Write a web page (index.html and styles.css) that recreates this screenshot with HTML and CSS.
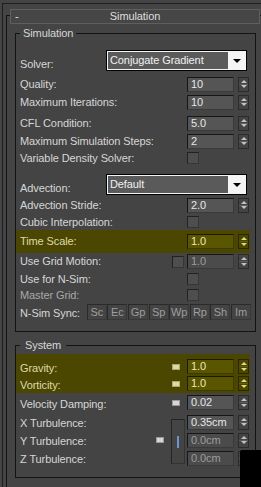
FILE: index.html
```html
<!DOCTYPE html>
<html lang="en">
<head>
    <meta charset="UTF-8">
    <meta name="viewport" content="width=device-width, initial-scale=1.0">
    <title>Simulation</title>
    <link rel="stylesheet" href="styles.css">
</head>
<body>

<div class="frame">
    <div class="rollout">
        <div class="roll-head">
            <span class="minus">-</span>
            <span class="roll-title">Simulation</span>
            <span></span>
        </div>

        <div class="roll-body">
            <fieldset class="group sim">
                <legend>Simulation</legend>

                <div class="row combo-row mt10">
                    <span class="lbl">Solver:</span>
                    <div class="combo"><span class="combo-text">Conjugate Gradient</span><span class="combo-arrow"></span></div>
                </div>
                <div class="row mt4">
                    <span class="lbl">Quality:</span>
                    <span class="num">10</span><span class="spin"></span>
                </div>
                <div class="row">
                    <span class="lbl">Maximum Iterations:</span>
                    <span class="num">10</span><span class="spin"></span>
                </div>
                <div class="row mt3">
                    <span class="lbl">CFL Condition:</span>
                    <span class="num">5.0</span><span class="spin"></span>
                </div>
                <div class="row">
                    <span class="lbl">Maximum Simulation Steps:</span>
                    <span class="num">2</span><span class="spin"></span>
                </div>
                <div class="row short">
                    <span class="lbl">Variable Density Solver:</span>
                    <span class="ctl"><span class="cb"></span></span>
                </div>

                <div class="row combo-row mt8">
                    <span class="lbl">Advection:</span>
                    <div class="combo"><span class="combo-text">Default</span><span class="combo-arrow"></span></div>
                </div>
                <div class="row mt1">
                    <span class="lbl">Advection Stride:</span>
                    <span class="num">2.0</span><span class="spin"></span>
                </div>
                <div class="row short">
                    <span class="lbl">Cubic Interpolation:</span>
                    <span class="ctl"><span class="cb"></span></span>
                </div>
                <div class="row hl tall">
                    <span class="lbl">Time Scale:</span>
                    <span class="num">1.0</span><span class="spin"></span>
                </div>
                <div class="row grid-motion">
                    <span class="lbl">Use Grid Motion:</span>
                    <span class="aux"><span class="cb"></span></span>
                    <span class="num off">1.0</span><span class="spin"></span>
                </div>
                <div class="row short mt1">
                    <span class="lbl">Use for N-Sim:</span>
                    <span class="ctl"><span class="cb"></span></span>
                </div>
                <div class="row short">
                    <span class="lbl dim">Master Grid:</span>
                    <span class="ctl"><span class="cb"></span></span>
                </div>
                <div class="row short sync-row mt1">
                    <span class="lbl">N-Sim Sync:</span>
                    <div class="sync">
                        <span class="sbtn">Sc</span>
                        <span class="sbtn">Ec</span>
                        <span class="sbtn">Gp</span>
                        <span class="sbtn">Sp</span>
                        <span class="sbtn">Wp</span>
                        <span class="sbtn">Rp</span>
                        <span class="sbtn">Sh</span>
                        <span class="sbtn">Im</span>
                    </div>
                </div>
            </fieldset>

            <fieldset class="group sys">
                <legend>System</legend>

                <div class="band">
                    <div class="row mid hl">
                        <span class="lbl">Gravity:</span>
                        <span class="aux"><span class="ind yellow"></span></span>
                        <span class="num">1.0</span><span class="spin"></span>
                    </div>
                    <div class="row mid hl">
                        <span class="lbl">Vorticity:</span>
                        <span class="aux"><span class="ind yellow"></span></span>
                        <span class="num">1.0</span><span class="spin"></span>
                    </div>
                </div>
                <div class="row mid mt1">
                    <span class="lbl">Velocity Damping:</span>
                    <span class="aux"><span class="ind"></span></span>
                    <span class="num">0.02</span><span class="spin"></span>
                </div>

                <div class="turb">
                    <div class="turb-labels">
                        <span class="lbl">X Turbulence:</span>
                        <span class="lbl">Y Turbulence:</span>
                        <span class="lbl">Z Turbulence:</span>
                    </div>
                    <div class="turb-ind"><span class="ind"></span></div>
                    <div class="bracket"><span class="link"></span></div>
                    <div class="turb-fields">
                        <div class="frow"><span class="num">0.35cm</span><span class="spin"></span></div>
                        <div class="frow"><span class="num off">0.0cm</span><span class="spin"></span></div>
                        <div class="frow"><span class="num off">0.0cm</span><span class="spin"></span></div>
                    </div>
                </div>
            </fieldset>
        </div>
    </div>
</div>

<div class="corner-block"></div>

</body>
</html>
```

FILE: styles.css
```css
body {
    margin: 0;
    background: #444444;
    font-family: "Liberation Sans", Arial, sans-serif;
    font-size: 11px;
    line-height: 13px;
    letter-spacing: -0.1px;
    color: #d6d6d6;
    overflow: hidden;
}

.frame {
    margin: 3px 0 0 2px;
    border-top: 1px solid #1e1e1e;
    border-left: 1px solid #1e1e1e;
    height: 490px;
}

.rollout {
    margin: 11px 0 0 3px;
    border-top: 1px solid #141414;
    border-left: 1px solid #141414;
    height: 480px;
}

.roll-head {
    display: grid;
    grid-template-columns: 1fr auto 1fr;
    align-items: center;
    width: 250px;
    height: 15px;
    box-sizing: border-box;
    margin: -7px 0 0 3px;
    border: 1px solid #5f5f5f;
    background: #464646;
}
.minus {
    padding-left: 4px;
    color: #e0e0e0;
}
.roll-title {
    color: #dedede;
}

.roll-body {
    padding-left: 8px;
}

.group {
    width: 241px;
    min-width: 0;
    box-sizing: border-box;
    margin: 3px 0 0;
    padding: 0 5px 11px 0;
    border: 1px solid #131313;
}
.group legend {
    margin-left: 4px;
    padding: 0 3px;
    line-height: 13px;
}
.sys {
    margin-top: 7px;
    padding-bottom: 10px;
}
.sys legend {
    padding: 0 5px;
}

.row {
    display: flex;
    align-items: center;
    height: 18px;
    padding: 0 1px 0 4px;
}
.row.short { height: 16px; }
.row.mid { height: 17px; }
.row.tall { height: 23px; }
.row.grid-motion { height: 17px; }
.combo-row { height: 21px; }
.combo-row .lbl { align-self: flex-end; }
.sync-row .lbl { align-self: flex-end; }

.mt1 { margin-top: 1px; }
.mt3 { margin-top: 3px; }
.mt4 { margin-top: 4px; }
.mt8 { margin-top: 8px; }
.mt10 { margin-top: 10px; }

.lbl {
    flex: 1;
    white-space: nowrap;
}
.lbl.dim {
    color: #a8a8a8;
}
.sys .lbl {
    padding-top: 4px;
}

.num {
    width: 47px;
    height: 15px;
    box-sizing: border-box;
    padding-left: 3px;
    background: #555555;
    border: 1px solid #161616;
    border-right-color: #3a3a3a;
    border-bottom-color: #3a3a3a;
    color: #e6e6e6;
}
.num.off {
    background: #4b4b4b;
    color: #9c9c9c;
}

.spin {
    display: flex;
    flex-direction: column;
    align-items: center;
    justify-content: space-evenly;
    width: 11px;
    height: 15px;
    box-sizing: border-box;
    margin-left: 4px;
    border: 1px solid #2b2b2b;
    background: linear-gradient(#444 6px, #5c5c5c 6px, #5c5c5c 7px, #444 7px);
}
.spin::before {
    content: "";
    border: 3px solid transparent;
    border-top: 0;
    border-bottom: 3px solid #c2c2c2;
}
.spin::after {
    content: "";
    border: 3px solid transparent;
    border-bottom: 0;
    border-top: 3px solid #c2c2c2;
}

.ctl {
    display: flex;
    align-items: center;
    width: 62px;
}
.aux {
    display: flex;
    align-items: center;
    width: 12px;
    margin-right: 3px;
}
.cb {
    width: 12px;
    height: 12px;
    box-sizing: border-box;
    background: #4e4e4e;
    border: 1px solid #222;
    border-right-color: #363636;
    border-bottom-color: #363636;
}

.ind {
    width: 8px;
    height: 6px;
    box-sizing: border-box;
    background: #d6d6d6;
    border: 1px solid #9a9a9a;
}
.ind.yellow {
    background: #dcdca0;
    border-color: #a8a870;
}

/* combo box */
.combo {
    display: flex;
    width: 141px;
    height: 21px;
    box-sizing: border-box;
    margin-right: 2px;
    padding: 1px;
    border: 1px solid #000;
    background: #f4f4f4;
}
.combo-text {
    flex: 1;
    padding-left: 2px;
    background: #5a5a5a;
    color: #f0f0f0;
    line-height: 16px;
}
.combo-arrow {
    display: flex;
    align-items: center;
    justify-content: center;
    width: 17px;
}
.combo-arrow::before {
    content: "";
    border: 4px solid transparent;
    border-bottom: 0;
    border-top: 4px solid #000;
}

/* highlighted (animated) rows */
.hl {
    background: #4b4700;
    color: #dedaa6;
}
.hl .num {
    background: #5a5600;
    border-color: #1c1a00;
    border-right-color: #3e3b00;
    border-bottom-color: #3e3b00;
    color: #ebe7b4;
}
.hl .spin {
    border-color: #2a2800;
    background: linear-gradient(#4b4700 6px, #625e10 6px, #625e10 7px, #4b4700 7px);
}
.hl .spin::before { border-bottom-color: #e0da7a; }
.hl .spin::after { border-top-color: #e0da7a; }

.band {
    margin-top: 2px;
    padding: 4px 0 1px;
    background: #4b4700;
}

/* n-sim sync buttons */
.sync {
    display: flex;
    gap: 0.6px;
    margin-right: -2px;
}
.sbtn {
    width: 20px;
    height: 16px;
    box-sizing: border-box;
    border: 1px solid #2a2a2a;
    border-right-color: #383838;
    border-bottom-color: #383838;
    text-align: center;
    line-height: 14px;
    color: #9e9e9e;
}

/* turbulence block */
.turb {
    display: flex;
    margin-top: 2px;
    padding: 0 1px 0 4px;
}
.turb-labels {
    flex: 1;
    display: flex;
    flex-direction: column;
}
.turb-labels .lbl {
    height: 18px;
    box-sizing: border-box;
    padding-top: 4px;
}
.turb-ind {
    display: flex;
    align-items: center;
    margin-right: 7px;
}
.bracket {
    display: flex;
    align-items: center;
    justify-content: center;
    width: 14px;
    height: 45px;
    box-sizing: border-box;
    margin: 6px 2px 0 0;
    border: 1px solid #242424;
    border-right-color: #333;
    border-bottom-color: #333;
}
.link {
    width: 2px;
    height: 12px;
    background: #6f92d2;
}
.turb-fields {
    display: flex;
    flex-direction: column;
}
.frow {
    display: flex;
    align-items: center;
    height: 18px;
}

.corner-block {
    position: absolute;
    left: 240px;
    top: 450px;
    width: 21px;
    height: 37px;
    background: #000;
    border-top-left-radius: 2px;
}
```
